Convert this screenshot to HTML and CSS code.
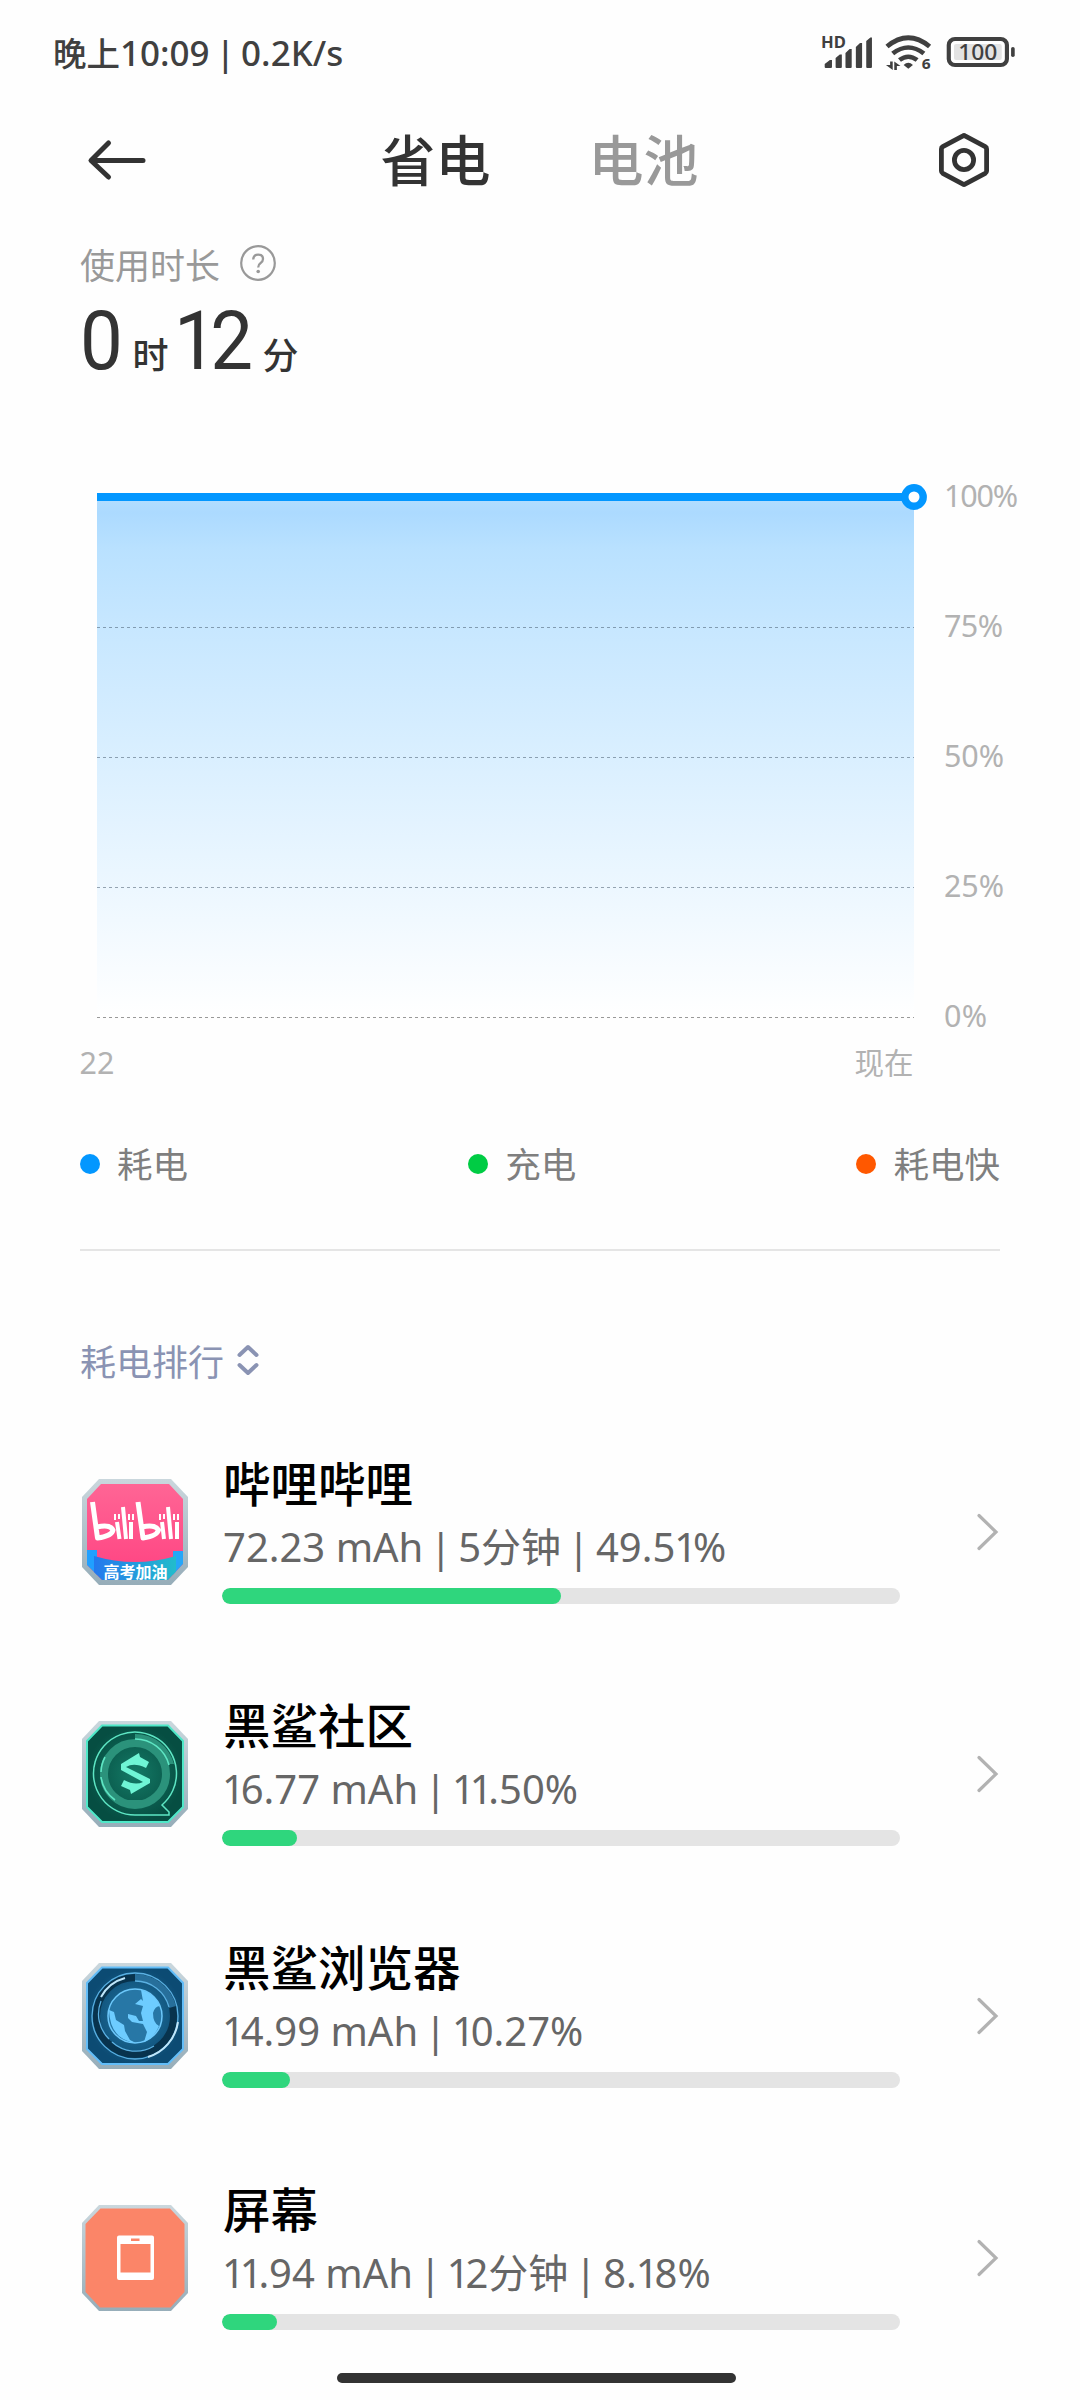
FILE: index.html
```html
<!DOCTYPE html>
<html lang="zh-CN">
<head>
<meta charset="utf-8">
<title>省电</title>
<link rel="stylesheet" href="styles.css">
</head>
<body>
<div class="screen">
  <div class="status">
    <div class="status-text">晚上<span class="clock">10:09 <s>|</s> 0.2K/s</span></div>
    <svg class="status-icons" width="203.500" height="50" viewBox="810 26 196 50" preserveAspectRatio="none">
      <g fill="#404040">
        <text x="812" y="48" class="hd">HD</text>
        <path d="M815.5 64l5-4h2v7q0 1-1 1h-5q-1 0-1-1zM826 58l4-3.500h2V67q0 1-1 1h-4q-1 0-1-1zM835.500 53l4-4h2V67q0 1-1 1h-4q-1 0-1-1zM845.500 47l4-4h2V67q0 1-1 1h-4q-1 0-1-1zM855.500 41l4-3.500h1.500V67q0 1-1 1h-3.500q-1 0-1-1z"/>
        <path d="M896 68.800l-4.500-3.800q4.500-4.500 9 0z"/>
        <path d="M878.500 61.500h2.500V70l-6.500-5h4zM882.500 61.500l6 4.500h-3.500V70h-2.500z"/>
        <text x="909" y="69.500" class="six">6</text>
        <rect x="995" y="47" width="3.500" height="10" rx="1.700"/>
      </g>
      <g fill="none" stroke="#404040" stroke-width="4.600">
        <path d="M875.500 46.500q20.500-17.500 41 0M881 53.500q15-12 30 0M887.500 60q8.500-6.500 17 0"/>
        <rect x="935" y="39" width="56" height="26" rx="6" stroke-width="4"/>
      </g>
      <rect x="940" y="44" width="46" height="16" rx="2" fill="#e3e3e3"/>
      <text x="963" y="60.500" class="level">100</text>
    </svg>
  </div>

  <div class="header">
    <svg class="back" width="60" height="44" viewBox="0 0 60 44" fill="none" stroke="#333" stroke-width="5" stroke-linecap="round" stroke-linejoin="round"><path d="M22.500 5L5 22.500 22.500 39M5.500 22.500H57"/></svg>
    <div class="tabs"><span class="tab active">省电</span><span class="tab">电池</span></div>
    <svg width="50" height="56" viewBox="0 0 50 56" fill="none" stroke="#333" stroke-width="4.800" stroke-linejoin="round"><path d="M24 3.800q1-.600 2 0L46.200 14.700q1.400.800 1.400 2.200V39.100q0 1.400-1.400 2.200L26 52.200q-1 .600-2 0L3.800 41.300Q2.400 40.500 2.400 39.100V16.900q0-1.400 1.400-2.200z"/><circle cx="25" cy="28" r="9.600"/></svg>
  </div>

  <div class="usage">
    <div class="usage-label">使用时长
      <svg width="38" height="38" viewBox="0 0 38 38"><circle cx="19" cy="19" r="16.800" fill="none" stroke="#999" stroke-width="2.200"/><path d="M14.200 15.500q.300-4.800 5-4.800 4.800 0 4.800 4.300 0 2.500-2.600 4.200-2.200 1.400-2.200 4.300" fill="none" stroke="#999" stroke-width="2.300"/><circle cx="19.200" cy="27.500" r="1.800" fill="#999"/></svg>
    </div>
    <div class="usage-time"><b class="zero">0</b><span class="hour">时</span><b class="min">12</b><span class="minute">分</span></div>
  </div>

  <svg class="chart" width="1080" height="620" viewBox="0 480 1080 620">
    <defs>
      <linearGradient id="area" x1="0" y1="0" x2="0" y2="1">
        <stop offset="0" stop-color="#b3deff"/><stop offset=".03" stop-color="#acdaff"/><stop offset=".1" stop-color="#b9e1ff"/><stop offset=".25" stop-color="#c7e7ff"/><stop offset="1" stop-color="#fff"/>
      </linearGradient>
    </defs>
    <rect x="97" y="497" width="817" height="520" fill="url(#area)"/>
    <g stroke="#3c506480" stroke-width="1" stroke-dasharray="3 3">
      <path d="M97 627.500H914M97 757.500H914M97 887.500H914"/>
      <path d="M97 1017.500H914" stroke="#999"/>
    </g>
    <path d="M97 497H914" stroke="#0397ff" stroke-width="8"/>
    <circle cx="914" cy="497" r="9.200" fill="#fff" stroke="#0397ff" stroke-width="7.400"/>
    <g class="axis">
      <text x="944" y="506.500" textLength="74">100%</text>
      <text x="944" y="636.500" textLength="59">75%</text>
      <text x="944" y="766.500" textLength="60">50%</text>
      <text x="944" y="896.500" textLength="60">25%</text>
      <text x="944" y="1026.500" textLength="43">0%</text>
      <text x="79.500" y="1074">22</text>
      <text x="854.500" y="1074" class="now">现在</text>
    </g>
  </svg>

  <div class="legend">
    <span><i class="dot use"></i>耗电</span>
    <span><i class="dot charge"></i>充电</span>
    <span><i class="dot fast"></i>耗电快</span>
  </div>

  <div class="rank-title">耗电排行
    <svg width="24" height="34" viewBox="0 0 24 34" fill="none" stroke="#8a93b3" stroke-width="4" stroke-linecap="round" stroke-linejoin="round"><path d="M3.500 12L12 4 20.500 12M3.500 22L12 30 20.500 22"/></svg>
  </div>

  <div class="list">
    <div class="item">
      <svg class="icon" width="106" height="106" viewBox="0 0 106 106">
        <defs>
          <linearGradient id="rim" x1="0" y1="0" x2="0" y2="1"><stop offset="0" stop-color="#cad7dd"/><stop offset="1" stop-color="#96adb9"/></linearGradient>
          <linearGradient id="pink" x1="0" y1="0" x2="0" y2="1"><stop offset="0" stop-color="#ff6796"/><stop offset="1" stop-color="#ff4080"/></linearGradient>
          <linearGradient id="ribbon"><stop offset="0" stop-color="#2478ee"/><stop offset="1" stop-color="#22bccb"/></linearGradient>
          <clipPath id="inner"><path d="M19 5H87L101 20V85L86 101H20L5 86V20z"/></clipPath>
        </defs>
        <path d="M17 0H89L106 18V88L89 106H17L0 88V18z" fill="url(#rim)"/>
        <g clip-path="url(#inner)">
          <rect width="106" height="106" fill="url(#pink)"/>
          <path d="M0 71H15V106H0z" fill="#20a0ff"/><path d="M106 72H91V106H106z" fill="#25a6f8"/>
          <path d="M12 77Q53 89 94 77V106H12z" fill="url(#ribbon)"/>
        </g>
        <g fill="none" stroke="#fff" stroke-linejoin="round">
          <path d="M10.500 23L15.500 59Q30 57 31 51Q28 45 15 48M56 23L61 59Q75 57 76.500 51Q73 45 60 48" stroke-width="5"/>
          <path d="M35 43L37.500 60M41 28L44 60M49 43V60M80 43L82 60M86 28L89 60M95 43V60" stroke-width="4"/>
          <path d="M33 35V41M37 35V40M47 35V41M51 35V41M78 35V41M82 35V40M92 35V41M96 35V41" stroke-width="2"/>
        </g>
        <text x="21.500" y="99" textLength="64" class="badge">高考加油</text>
      </svg>
      <div class="info"><div class="name">哔哩哔哩</div><div class="detail">72.23 mAh <s>|</s> 5分钟 <s>|</s> 49.5<i>1</i>%</div><div class="bar"><i style="width:50%"></i></div></div>
      <svg class="go" width="24" height="40" viewBox="0 0 24 40"><path d="M4 3.500L21 20 4 36.500"/></svg>
    </div>
    <div class="item">
      <svg class="icon" width="106" height="106" viewBox="0 0 106 106">
        <defs><radialGradient id="green"><stop offset="0" stop-color="#147a66"/><stop offset="1" stop-color="#064e42"/></radialGradient></defs>
        <path d="M17 0H89L106 18V88L89 106H17L0 88V18z" fill="url(#rim)"/>
        <path d="M20 4.500H86L101 20V86L86 101H20L5 86V20z" fill="url(#green)" stroke="#4fe8c8" stroke-width="2"/>
        <circle cx="53" cy="53" r="31" fill="none" stroke="#2b927b" stroke-width="8"/>
        <path d="M53 13A40 40 0 0 1 92 43H87A35 35 0 0 0 53 18z" fill="#2b927b"/>
        <path d="M53 18A35 35 0 0 1 87 44M33 79A34 34 0 0 1 19 56M19 51A34 34 0 0 1 23 36" fill="none" stroke="#5ee6c4" stroke-width="1.600"/>
        <path d="M80 84A41.500 41.500 0 1 0 53 94H87V91z" fill="none" stroke="#5ee6c4" stroke-width="1.500"/>
        <path d="M33 80H62" stroke="#2b927b" stroke-width="2"/>
        <path d="M39 43L57 32 58 36 67 41 64 47Q52 41 44 46L68 58V62L49 73 48 69 39 65 42 59Q53 65 61 61L39 49z" fill="#6ff5d5"/>
      </svg>
      <div class="info"><div class="name">黑鲨社区</div><div class="detail"><i>1</i>6.77 mAh <s>|</s> <i>11</i>.50%</div><div class="bar"><i style="width:11.100%"></i></div></div>
      <svg class="go" width="24" height="40" viewBox="0 0 24 40"><path d="M4 3.500L21 20 4 36.500"/></svg>
    </div>
    <div class="item">
      <svg class="icon" width="106" height="106" viewBox="0 0 106 106">
        <defs><radialGradient id="blue"><stop offset="0" stop-color="#2479a6"/><stop offset="1" stop-color="#0c4b73"/></radialGradient></defs>
        <path d="M17 0H89L106 18V88L89 106H17L0 88V18z" fill="url(#rim)"/>
        <path d="M20 4.500H86L101 20V86L86 101H20L5 86V20z" fill="url(#blue)" stroke="#62bdf8" stroke-width="2"/>
        <circle cx="53" cy="53" r="38.500" fill="none" stroke="#08334d" stroke-width="7"/>
        <path d="M53 11A42 42 0 0 1 94 43L87 45A35 35 0 0 0 53 18z" fill="#276f9b"/>
        <g fill="none" stroke="#5ab0e2" stroke-width="1.300"><circle cx="53" cy="53" r="43"/><path d="M53 18A35 35 0 0 1 87 44M72 83A35 35 0 0 1 30 79M27 76A35 35 0 0 1 19 38"/></g>
        <path d="M19 34A39 39 0 0 1 43 15M96 59A43 43 0 0 1 66 94" fill="none" stroke="#bfe6fa" stroke-width="2"/>
        <circle cx="53" cy="53" r="27" fill="#2777a6" stroke="#6dc8fb" stroke-width="1.500"/>
        <path d="M59 27Q75 31 79 47L78 43Q73 43 71 50Q71 60 77 63Q72 75 62 79L65 69 61 61 50 59 46 55V51L54 53 57 58H61L59 50 61 43 53 41 59 36 61 38zM27 47L32 49 34 57 42 62 43 68 48 77 54 80Q28 77 27 47z" fill="#6dccff"/>
      </svg>
      <div class="info"><div class="name">黑鲨浏览器</div><div class="detail"><i>1</i>4.99 mAh <s>|</s> <i>1</i>0.27%</div><div class="bar"><i style="width:10.030%"></i></div></div>
      <svg class="go" width="24" height="40" viewBox="0 0 24 40"><path d="M4 3.500L21 20 4 36.500"/></svg>
    </div>
    <div class="item">
      <svg class="icon" width="106" height="106" viewBox="0 0 106 106">
        <path d="M17 0H89L106 18V88L89 106H17L0 88V18z" fill="url(#rim)"/>
        <path d="M18.500 3.500H88L102.500 19V87L88.500 102.500H18L3.500 87V19z" fill="#fb8568"/>
        <path d="M36 30.500H70Q72 30.500 72 32.500V73Q72 75 70 75H37Q35 75 35 73V32.500Q35 30.500 37 30.500z" fill="#fff"/>
        <path d="M38.500 39H68.500V67.500H38.500zM49 33.500H57.500V36H49z" fill="#fb8568"/>
      </svg>
      <div class="info"><div class="name">屏幕</div><div class="detail"><i>11</i>.94 mAh <s>|</s> <i>1</i>2分钟 <s>|</s> 8.<i>1</i>8%</div><div class="bar"><i style="width:8.110%"></i></div></div>
      <svg class="go" width="24" height="40" viewBox="0 0 24 40"><path d="M4 3.500L21 20 4 36.500"/></svg>
    </div>
  </div>
  <div class="home"></div>
</div>
</body>
</html>
```
FILE: styles.css
```css
* { box-sizing: border-box; }
body { margin: 0; background: #fefefe; font-family: "Noto Sans", "Noto Sans CJK SC", sans-serif; color: #333; }
svg { display: block; flex: none; }
.screen { width: 1080px; height: 2400px; overflow: hidden; display: flex; flex-direction: column; white-space: nowrap; }
.screen > * { flex: none; }
.status { height: 108px; padding: 26px 58px 0 53px; display: flex; justify-content: space-between; align-items: flex-start; }
.status-text { font-size: 33.500px; line-height: 53px; font-weight: 500; color: #404040; }
.clock { font-size: 35px; }
.clock s { text-decoration: none; margin: 0 -3px; }
.hd { font: 700 16px "Noto Sans"; }
.six { font: 700 15px "Noto Sans"; }
.level { font: 500 22px "Noto Sans"; fill: #404040; text-anchor: middle; }
.header { height: 104px; padding: 0 91px 0 86px; display: flex; align-items: center; justify-content: space-between; }
.tabs { display: flex; gap: 98px; margin-right: 6px; font-size: 55px; font-weight: 500; line-height: 80px; }
.tab { color: #999; }
.tab.active { color: #333; }
.usage { height: 268px; padding: 25px 80px 0 80px; }
.usage-label { display: flex; align-items: center; gap: 19px; height: 52px; font-size: 35px; color: #999; }
.usage-time { display: flex; align-items: baseline; line-height: 100px; margin-top: 3px; }
.usage-time b { font: 400 81px/100px Roboto, sans-serif; transform: scaleX(.94); transform-origin: left; }
.usage-time .min { letter-spacing: -7px; margin-left: 5px; }
.usage-time span { font-size: 36px; font-weight: 500; }
.usage-time .hour { margin-left: 7px; }
.usage-time .minute { margin-left: 12px; }
.axis { font-size: 30.500px; fill: #b2b2b2; }
.now { font-size: 29.500px; }
.badge { font: 700 16px "Noto Sans CJK SC", sans-serif; fill: #fff; }
.legend { height: 151px; margin: 0 80px; padding-top: 39px; border-bottom: 2px solid #e5e5e5; display: flex; justify-content: space-between; font-size: 35.500px; line-height: 50px; color: #7f7f7f; }
.legend span { display: flex; height: 50px; align-items: center; }
.dot { width: 20px; height: 20px; border-radius: 50%; margin-right: 17px; }
.use { background: #0397ff; }
.charge { background: #00cc44; }
.fast { background: #ff5800; }
.rank-title { height: 185px; padding: 33px 80px 0; display: flex; gap: 12px; align-items: center; font-size: 36px; color: #8a93b3; }
.item { height: 242px; padding: 0 81px 0 82px; display: flex; align-items: flex-start; }
.icon { margin-top: 43px; }
.info { width: 678px; margin-left: 34px; }
.name { padding-left: 1px; font-size: 47.500px; line-height: 66px; font-weight: 500; color: #000; margin-top: 15px; }
.detail { padding-left: 1px; font-size: 40px; line-height: 60px; color: #666; }
.detail i { font-style: normal; letter-spacing: -5.200px; margin-left: -1px; margin-right: 1px; }
.detail s { text-decoration: none; margin: 0 -4px; }
.bar { height: 16px; border-radius: 8px; background: #e4e4e4; margin-top: 11px; overflow: hidden; margin-left: 0; }
.bar i { display: block; height: 16px; border-radius: 8px; background: #2fd67d; }
.go { margin: 76px 0 0 auto; fill: none; stroke: #b2b2b2; stroke-width: 3.200; stroke-linecap: round; }
.home { position: absolute; left: 337px; top: 2373px; width: 399px; height: 10px; border-radius: 5px; background: #333; }
```
